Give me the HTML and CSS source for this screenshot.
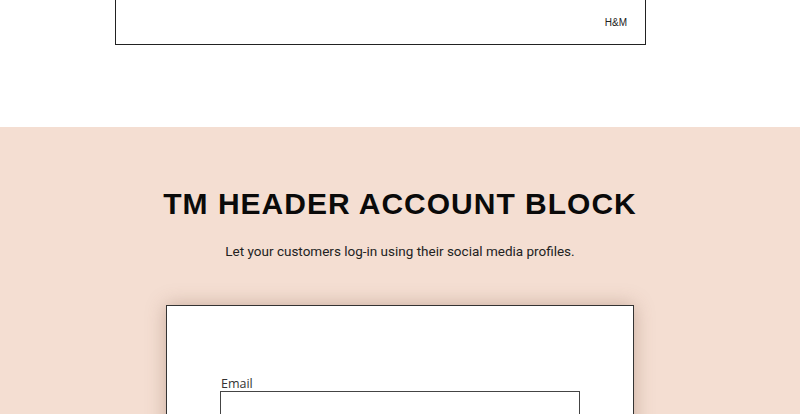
FILE: index.html
```html
<!DOCTYPE html>
<html lang="en">
<head>
  <meta charset="UTF-8">
  <meta name="viewport" content="width=device-width, initial-scale=1.0">
  <title>TM Header Account Block</title>
  <link rel="stylesheet" href="styles.css">
</head>
<body>
  <div class="top-section">
    <div class="brand-card">
      <span class="brand-name">H&amp;M</span>
    </div>
  </div>

  <div class="account-section">
    <h1 class="section-title">TM HEADER ACCOUNT BLOCK</h1>
    <p class="section-text">Let your customers log-in using their social media profiles.</p>

    <div class="login-card">
      <form class="login-form">
        <label for="email">Email</label>
        <input type="email" id="email">
      </form>
    </div>
  </div>
</body>
</html>
```

FILE: styles.css
```css
body {
  margin: 0;
  font-family: "Liberation Sans", Arial, sans-serif;
  background-color: #fff;
  overflow: hidden;
}

.top-section {
  height: 127px;
}

.brand-card {
  width: 531px;
  height: 45px;
  margin-left: 115px;
  border: 1px solid #222;
  border-top: none;
  box-sizing: border-box;
  display: flex;
  justify-content: flex-end;
  align-items: flex-start;
  padding: 17px 18px 0 0;
}

.brand-name {
  font-size: 10px;
  color: #222;
}

.account-section {
  background-color: #f4ded2;
  padding-top: 60px;
  height: 400px;
  text-align: center;
}

.section-title {
  margin: 0;
  font-family: "Liberation Sans", Arial, sans-serif;
  font-size: 30px;
  font-weight: bold;
  letter-spacing: 1px;
  color: #0a0a0a;
}

.section-text {
  margin: 22px 0 0;
  font-family: Roboto, sans-serif;
  font-size: 13.5px;
  color: #222;
}

.login-card {
  width: 468px;
  margin: 46px auto 0;
  height: 300px;
  background-color: #fff;
  border: 1px solid #333;
  box-sizing: border-box;
  box-shadow: 0 0 18px rgba(120, 80, 60, 0.35);
  padding-top: 69px;
  text-align: left;
}

.login-form {
  margin-left: 53px;
  display: flex;
  flex-direction: column;
}

.login-form label {
  font-family: "Open Sans", sans-serif;
  font-size: 12.5px;
  color: #333;
  margin-left: 1px;
  margin-bottom: -1px;
}

.login-form input {
  width: 360px;
  height: 40px;
  box-sizing: border-box;
  border: 1px solid #444;
  margin: 0;
  padding: 0 10px;
}
```
